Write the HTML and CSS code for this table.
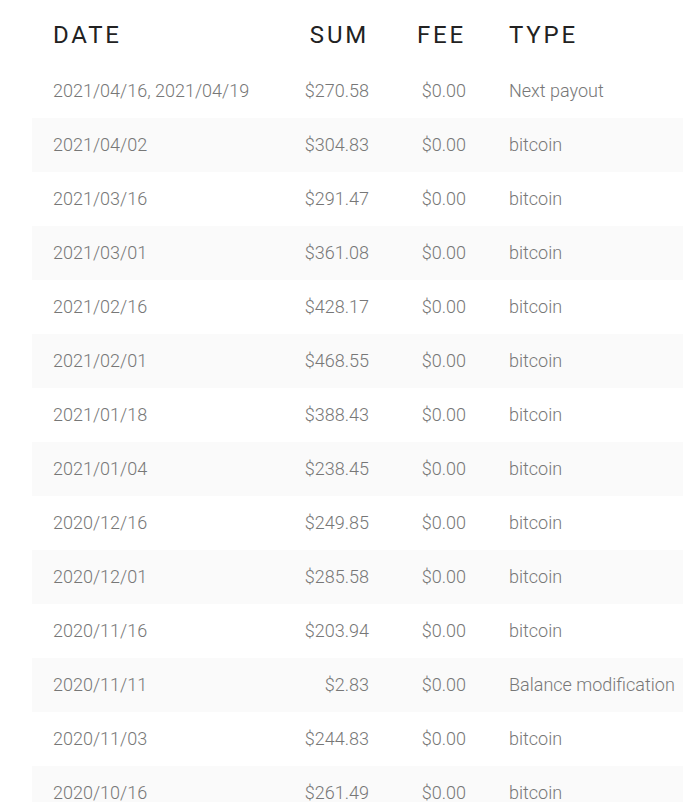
FILE: index.html
```html
<!DOCTYPE html>
<html>
<head>
<meta charset="utf-8">
<link rel="stylesheet" href="styles.css">
</head>
<body>
<div class="payouts">
  <div class="row head">
    <div class="c-date">DATE</div>
    <div class="c-sum">SUM</div>
    <div class="c-fee">FEE</div>
    <div class="c-type">TYPE</div>
  </div>
  <div class="row"><div class="c-date">2021/04/16, 2021/04/19</div><div class="c-sum">$270.58</div><div class="c-fee">$0.00</div><div class="c-type">Next payout</div></div>
  <div class="row alt"><div class="c-date">2021/04/02</div><div class="c-sum">$304.83</div><div class="c-fee">$0.00</div><div class="c-type">bitcoin</div></div>
  <div class="row"><div class="c-date">2021/03/16</div><div class="c-sum">$291.47</div><div class="c-fee">$0.00</div><div class="c-type">bitcoin</div></div>
  <div class="row alt"><div class="c-date">2021/03/01</div><div class="c-sum">$361.08</div><div class="c-fee">$0.00</div><div class="c-type">bitcoin</div></div>
  <div class="row"><div class="c-date">2021/02/16</div><div class="c-sum">$428.17</div><div class="c-fee">$0.00</div><div class="c-type">bitcoin</div></div>
  <div class="row alt"><div class="c-date">2021/02/01</div><div class="c-sum">$468.55</div><div class="c-fee">$0.00</div><div class="c-type">bitcoin</div></div>
  <div class="row"><div class="c-date">2021/01/18</div><div class="c-sum">$388.43</div><div class="c-fee">$0.00</div><div class="c-type">bitcoin</div></div>
  <div class="row alt"><div class="c-date">2021/01/04</div><div class="c-sum">$238.45</div><div class="c-fee">$0.00</div><div class="c-type">bitcoin</div></div>
  <div class="row"><div class="c-date">2020/12/16</div><div class="c-sum">$249.85</div><div class="c-fee">$0.00</div><div class="c-type">bitcoin</div></div>
  <div class="row alt"><div class="c-date">2020/12/01</div><div class="c-sum">$285.58</div><div class="c-fee">$0.00</div><div class="c-type">bitcoin</div></div>
  <div class="row"><div class="c-date">2020/11/16</div><div class="c-sum">$203.94</div><div class="c-fee">$0.00</div><div class="c-type">bitcoin</div></div>
  <div class="row alt"><div class="c-date">2020/11/11</div><div class="c-sum">$2.83</div><div class="c-fee">$0.00</div><div class="c-type">Balance modification</div></div>
  <div class="row"><div class="c-date">2020/11/03</div><div class="c-sum">$244.83</div><div class="c-fee">$0.00</div><div class="c-type">bitcoin</div></div>
  <div class="row alt"><div class="c-date">2020/10/16</div><div class="c-sum">$261.49</div><div class="c-fee">$0.00</div><div class="c-type">bitcoin</div></div>
</div>
</body>
</html>
```

FILE: styles.css
```css
html, body {
  margin: 0;
  padding: 0;
  background: #ffffff;
}
body {
  font-family: Roboto, "Liberation Sans", sans-serif;
  overflow: hidden;
  height: 802px;
}
.payouts {
  margin-left: 32px;
  display: flex;
  flex-direction: column;
}
.row {
  display: grid;
  grid-template-columns: 236px 80px 97px 1fr;
  align-items: center;
  box-sizing: border-box;
  height: 54px;
  padding-left: 21px;
  padding-bottom: 2px;
  font-size: 18px;
  font-weight: 300;
  color: #777777;
  white-space: nowrap;
}
.row.alt {
  background: #fafafa;
}
.row.head {
  height: 64px;
  padding-top: 6px;
  padding-bottom: 0;
  font-size: 24px;
  font-weight: 400;
  letter-spacing: 2.8px;
  color: #222222;
}
.c-sum, .c-fee {
  text-align: right;
}
.c-type {
  padding-left: 43px;
}
```
